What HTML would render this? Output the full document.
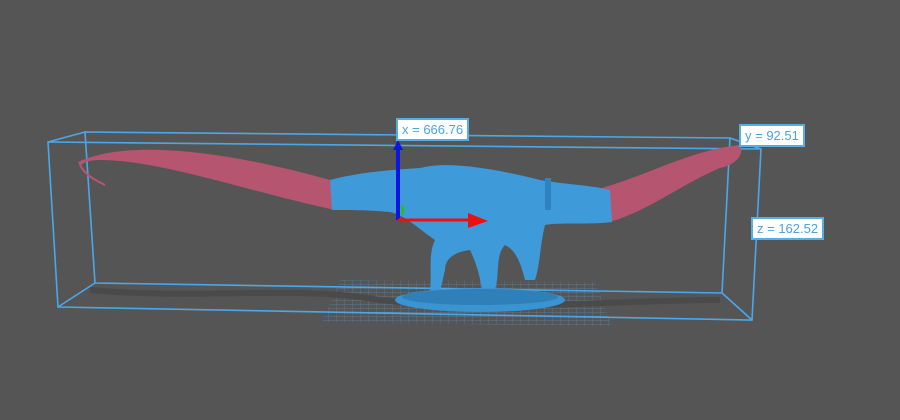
<!DOCTYPE html>
<html><head><style>
html,body{margin:0;padding:0;background:#555555;width:900px;height:420px;overflow:hidden}
.lbl{position:absolute;background:#fff;border:2px solid #56aee6;color:#4aa3e0;font:13px "Liberation Sans",sans-serif;padding:1px 4px;line-height:17px;white-space:nowrap}
</style></head><body>
<svg width="900" height="420" style="position:absolute;left:0;top:0">
<defs>
<pattern id="g" width="8" height="4" patternUnits="userSpaceOnUse"><path d="M0 0H8M0 0V4" stroke="#5a8fb8" stroke-width="0.7" fill="none"/></pattern>
</defs>
<polygon points="340,280 595,282 612,326 322,322" fill="url(#g)" opacity="0.8"/>
<path d="M90,290 C200,300 300,285 380,300 C500,312 620,300 720,300" stroke="#4a4a4a" stroke-width="6" fill="none"/>
<g stroke="#4aa8ea" stroke-width="1.6" fill="none">
<polygon points="85,132 730,138 722,293 95,283"/>
<polygon points="48,142 761,149 752,320 58,307"/>
<line x1="85" y1="132" x2="48" y2="142"/><line x1="730" y1="138" x2="761" y2="149"/>
<line x1="722" y1="293" x2="752" y2="320"/><line x1="95" y1="283" x2="58" y2="307"/>
</g>
<path d="M78,162 C130,138 230,152 330,180 L335,210 C250,192 160,160 100,160 C90,160 84,162 80,166 Z" fill="#b5556f"/>
<path d="M80,165 C85,175 95,180 105,185" stroke="#b5556f" stroke-width="2" fill="none"/>
<path d="M595,190 C650,175 690,150 740,145 C745,155 735,165 720,168 C680,185 650,210 610,222 Z" fill="#b5556f"/>
<path d="M330,180 C360,172 390,170 420,168 C450,160 500,170 540,180 C570,185 590,185 610,190 L612,222 C590,225 560,222 545,225 C540,245 540,265 535,280 L525,280 C520,260 515,250 505,245 C495,255 500,275 495,290 L482,290 C480,275 475,260 470,250 C455,252 445,258 445,270 L440,292 L430,292 C432,270 428,255 435,240 C420,230 405,215 390,212 C370,210 345,210 332,210 Z" fill="#3e9ad8"/>
<ellipse cx="480" cy="300" rx="85" ry="12" fill="#3a94d2"/>
<ellipse cx="480" cy="297" rx="78" ry="8" fill="#2f7fb8"/>
<rect x="545" y="178" width="6" height="32" fill="#2f82c0"/>
<line x1="398" y1="220" x2="398" y2="148" stroke="#0a17e0" stroke-width="4"/>
<polygon points="393,150 403,150 398,140" fill="#0a17e0"/>
<line x1="398" y1="220" x2="470" y2="220" stroke="#ee1010" stroke-width="3"/>
<polygon points="468,213 488,221 468,228" fill="#ee1010"/>
<path d="M401,204 A7,7 0 0 1 401,216 Z" fill="#22c020"/>
</svg>
<div class="lbl" style="left:396px;top:118px">x = 666.76</div>
<div class="lbl" style="left:739px;top:124px">y = 92.51</div>
<div class="lbl" style="left:751px;top:217px">z = 162.52</div>
</body></html>
